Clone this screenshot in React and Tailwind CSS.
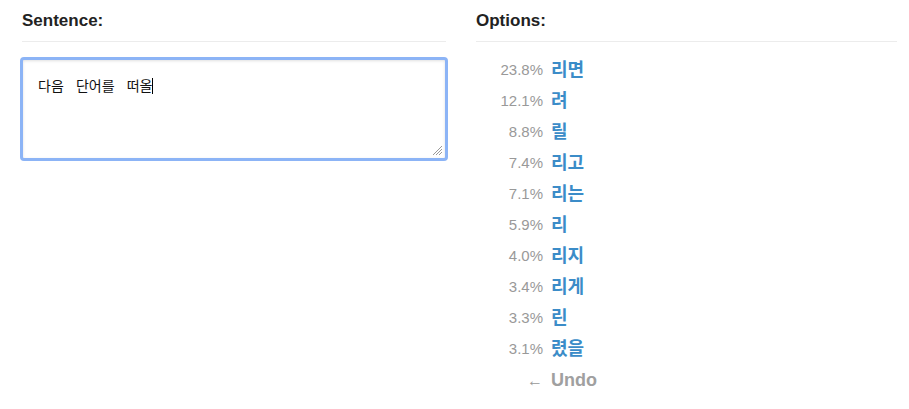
import React from "react";

const options = [
  ["23.8%", "리면"],
  ["12.1%", "려"],
  ["8.8%", "릴"],
  ["7.4%", "리고"],
  ["7.1%", "리는"],
  ["5.9%", "리"],
  ["4.0%", "리지"],
  ["3.4%", "리게"],
  ["3.3%", "린"],
  ["3.1%", "렸을"],
];

const font = { fontFamily: '"Liberation Sans", "Noto Sans CJK KR", sans-serif' };

function ResizeGrip() {
  return (
    <svg className="absolute right-[2px] bottom-[2px]" width="11" height="11" viewBox="0 0 11 11">
      <line x1="1" y1="10" x2="10" y2="1" stroke="#999" strokeWidth="1" />
      <line x1="4" y1="10" x2="10" y2="4" stroke="#999" strokeWidth="1" />
      <line x1="7" y1="10" x2="10" y2="7" stroke="#999" strokeWidth="1" />
    </svg>
  );
}

export default function App() {
  return (
    <div className="bg-white w-[909px] h-[409px] pl-[22px] pr-[12px]" style={font}>
      <div className="grid grid-cols-[424px_1fr] gap-[30px]">
        {/* sentence column */}
        <div>
          <h2 className="pt-[10px] pb-[9px] text-[17px] leading-[22px] font-bold text-[#222] border-b border-[#ececec]">
            Sentence:
          </h2>
          <div className="-mx-[2px] mt-[15px] relative h-[104px] rounded-[4px] border-[3px] border-[#8cb4f6] bg-white shadow-[inset_0_1px_3px_rgba(0,0,0,0.12)]">
            <div
              className="pt-[15px] pl-[15px] text-[14px] leading-[20px] text-[#111] whitespace-pre [word-spacing:9px]"
              style={{ fontFamily: '"Noto Sans CJK KR", sans-serif' }}
            >
              다음 단어를 떠올<span className="inline-block w-px h-[16px] bg-black align-[-3px]"></span>
            </div>
            <ResizeGrip />
          </div>
        </div>

        {/* options column */}
        <div>
          <h2 className="pt-[10px] pb-[9px] text-[17px] leading-[22px] font-bold text-[#222] border-b border-[#ececec]">
            Options:
          </h2>
          <ul className="mt-[13px]">
            {options.map(([pct, word]) => (
              <li key={word} className="flex items-center h-[31px]">
                <span className="w-[67px] text-right text-[15px] text-[#999]">{pct}</span>
                <span className="ml-[8px] text-[18px] font-bold text-[#3b8cc8]">{word}</span>
              </li>
            ))}
            <li className="flex items-center h-[31px]">
              <span className="w-[67px] text-right text-[16px] text-[#999]">←</span>
              <span className="ml-[8px] text-[18px] font-bold text-[#a0a0a0]">Undo</span>
            </li>
          </ul>
        </div>
      </div>
    </div>
  );
}
